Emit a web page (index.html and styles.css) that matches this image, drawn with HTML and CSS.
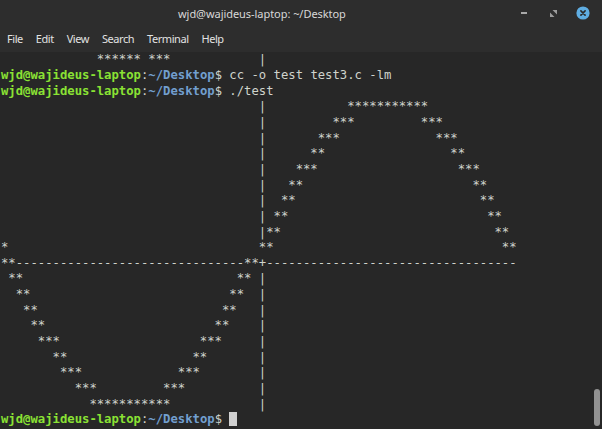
FILE: index.html
```html
<!DOCTYPE html>
<html lang="en">
<head>
<meta charset="utf-8">
<title>wjd@wajideus-laptop: ~/Desktop</title>
<link rel="stylesheet" href="styles.css">
</head>
<body>
<div class="window">
  <header class="titlebar">
    <div class="title">wjd@wajideus-laptop: ~/Desktop</div>
    <div class="controls">
      <span class="ctl"><span class="min"></span></span>
      <span class="ctl">
        <svg class="max" width="7" height="7" viewBox="0 0 7 7"><path d="M2.5 0H7V4.5Z M0 2.5V7H4.5Z" fill="#9c9c9c"/></svg>
      </span>
      <span class="ctl">
        <svg class="close" width="14" height="14" viewBox="0 0 14 14"><circle cx="7" cy="7" r="6.6" fill="#5fade2"/><path d="M4.9 4.9L9.1 9.1M9.1 4.9L4.9 9.1" stroke="#2a2a2a" stroke-width="1.6" stroke-linecap="round"/></svg>
      </span>
    </div>
  </header>
  <nav class="menubar">
    <span class="menu-item">File</span>
    <span class="menu-item">Edit</span>
    <span class="menu-item">View</span>
    <span class="menu-item">Search</span>
    <span class="menu-item">Terminal</span>
    <span class="menu-item">Help</span>
  </nav>
  <main class="terminal">
<pre class="screen">             ****** ***            |
<span class="u">wjd@wajideus-laptop</span>:<span class="p">~/Desktop</span>$ cc -o test test3.c -lm
<span class="u">wjd@wajideus-laptop</span>:<span class="p">~/Desktop</span>$ ./test
                                   |           ***********
                                   |         ***         ***
                                   |       ***             ***
                                   |      **                 **
                                   |    ***                   ***
                                   |   **                       **
                                   |  **                         **
                                   | **                           **
                                   |**                             **
*                                  **                               **
**-------------------------------**+----------------------------------
 **                             ** |
  **                           **  |
   **                         **   |
    **                       **    |
     ***                   ***     |
       **                 **       |
        ***             ***        |
          ***         ***          |
            ***********            |
<span class="u">wjd@wajideus-laptop</span>:<span class="p">~/Desktop</span>$ <span class="cursor"> </span></pre>
    <div class="scroll-thumb"></div>
  </main>
</div>
</body>
</html>
```

FILE: styles.css
```css
* {
  box-sizing: border-box;
  margin: 0;
  padding: 0;
}

html,
body {
  width: 602px;
  height: 429px;
  overflow: hidden;
  background: #272727;
}

.window {
  width: 602px;
  height: 429px;
  display: flex;
  flex-direction: column;
  background: #272727;
}

.titlebar {
  height: 26px;
  flex: none;
  display: grid;
  grid-template-columns: 1fr auto;
  align-items: center;
  background: #2d2d2d;
}

.title {
  padding-left: 178px;
  font-family: "Noto Sans", sans-serif;
  font-size: 11px;
  letter-spacing: -0.05px;
  color: #d8d8d8;
  white-space: nowrap;
}

.controls {
  display: flex;
  align-items: center;
  padding-right: 4px;
}

.ctl {
  width: 29.5px;
  height: 26px;
  display: flex;
  align-items: center;
  justify-content: center;
}

.min {
  display: block;
  width: 6px;
  height: 2px;
  background: #a8a8a8;
}

.menubar {
  height: 26px;
  flex: none;
  display: flex;
  align-items: center;
  gap: 13px;
  padding-left: 7px;
  padding-bottom: 1px;
  background: #2d2d2d;
}

.menu-item {
  font-family: "Noto Sans", sans-serif;
  font-size: 11px;
  letter-spacing: -0.45px;
  color: #e2e2e2;
}

.terminal {
  flex: 1;
  position: relative;
  overflow: hidden;
  background: #272727;
}

.screen {
  padding-left: 1px;
  padding-top: 0.3px;
  font-family: "DejaVu Sans Mono", monospace;
  font-size: 12.24px;
  line-height: 15.65px;
  color: #cfd3cc;
  white-space: pre;
}

.u {
  color: #8ae234;
  font-weight: bold;
}

.p {
  color: #729fcf;
  font-weight: bold;
}

.cursor {
  background: #d0d0d0;
}

.scroll-thumb {
  position: absolute;
  right: 2px;
  bottom: 3px;
  width: 6px;
  height: 37px;
  border-radius: 3px;
  background: #929292;
}
```
